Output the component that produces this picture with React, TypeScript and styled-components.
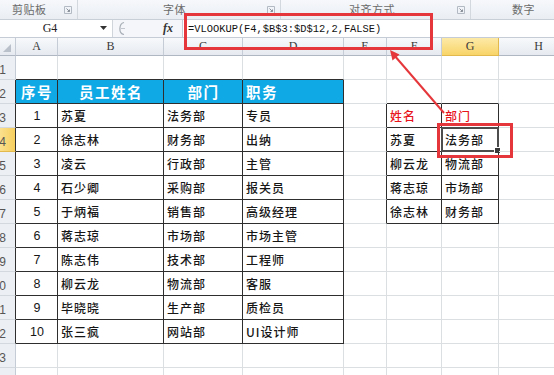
import styled, { createGlobalStyle, css } from 'styled-components';

const GlobalStyle = createGlobalStyle`
  html, body { margin: 0; padding: 0; background: #fff; }
  body { font-family: "Noto Sans CJK SC", "Liberation Sans", sans-serif; }
`;

const COLS = [16, 42, 106, 79, 101, 43, 55, 57, 80];
const LETTERS = ['', 'A', 'B', 'C', 'D', 'E', 'F', 'G', 'H'];
const ROW_COUNT = 14;
const GRID = '#dcdfe2';
const DARK = '#2e2e2e';

const staff = [
  ['1', '苏夏', '法务部', '专员'],
  ['2', '徐志林', '财务部', '出纳'],
  ['3', '凌云', '行政部', '主管'],
  ['4', '石少卿', '采购部', '报关员'],
  ['5', '于炳福', '销售部', '高级经理'],
  ['6', '蒋志琼', '市场部', '市场主管'],
  ['7', '陈志伟', '技术部', '工程师'],
  ['8', '柳云龙', '物流部', '客服'],
  ['9', '毕晓晓', '生产部', '质检员'],
  ['10', '张三疯', '网站部', 'UI设计师'],
];

const lookup = [
  ['姓名', '部门'],
  ['苏夏', '法务部'],
  ['柳云龙', '物流部'],
  ['蒋志琼', '市场部'],
  ['徐志林', '财务部'],
];

type Kind = 'plain' | 'num' | 'head' | 'red';

const Page = styled.div`
  position: relative;
  width: 554px;
  height: 375px;
  overflow: hidden;
  background: #fff;
`;

const Ribbon = styled.div`
  display: flex;
  height: 20px;
  background: linear-gradient(#f6f8fb, #eaeef3);
  border-bottom: 1px solid #c9cfd7;
  box-sizing: border-box;
`;

const Group = styled.div<{ $w: number; $pl: number }>`
  flex: 0 0 ${p => p.$w}px;
  display: flex;
  align-items: center;
  padding-left: ${p => p.$pl}px;
  border-right: 1px solid #d3d8df;
  box-sizing: border-box;
`;

const GroupLabel = styled.span`
  font-size: 11px;
  line-height: 1;
  color: #6a6a6a;
  letter-spacing: 0.5px;
  white-space: nowrap;
`;

const Launcher = styled.svg`
  flex: 0 0 8px;
  width: 8px;
  height: 8px;
  margin: 0 5px 0 auto;
`;

const FormulaBar = styled.div`
  display: flex;
  height: 17px;
  border-bottom: 1px solid #c5ccd5;
  background: #f4f6f9;
`;

const NameBox = styled.div`
  flex: 0 0 113px;
  display: flex;
  align-items: center;
  background: #fff;
  border-right: 1px solid #d0d5dc;
  box-sizing: border-box;
`;

const NameText = styled.span`
  flex: 0 0 100px;
  text-align: center;
  font-family: "Liberation Serif", serif;
  font-size: 12px;
  color: #222;
`;

const Handle = styled.svg`
  flex: 0 0 14px;
  width: 14px;
  height: 17px;
  margin-left: 2px;
`;

const FxArea = styled.div`
  flex: 0 0 53px;
  display: flex;
  align-items: center;
  justify-content: flex-end;
  padding-right: 9px;
  box-sizing: border-box;
`;

const Fx = styled.span`
  font-family: "Liberation Serif", serif;
  font-style: italic;
  font-weight: bold;
  font-size: 12px;
  color: #333;
`;

const FormulaInput = styled.div`
  flex: 1;
  display: flex;
  align-items: center;
  padding-left: 5px;
  background: #fff;
  border-left: 1px solid #c5ccd5;
  font-family: "Liberation Mono", monospace;
  font-size: 10.4px;
  color: #111;
  white-space: nowrap;
`;

const Sheet = styled.div`
  display: grid;
  grid-template-columns: ${COLS.map(c => c + 'px').join(' ')};
  grid-template-rows: 18px;
  grid-auto-rows: 24px;
`;

const ColHead = styled.div<{ $active?: boolean }>`
  box-sizing: border-box;
  display: flex;
  align-items: center;
  justify-content: center;
  font-family: "Liberation Serif", serif;
  font-size: 12px;
  color: #3a3a3a;
  border-right: 1px solid #c6ccd5;
  border-bottom: 1px solid #aeb7c2;
  background: ${p => (p.$active ? 'linear-gradient(#fdeaa8, #f8d468)' : 'linear-gradient(#f7f9fb, #e6eaf0)')};
  ${p => p.$active && css`border-color: #e2b94c;`}
`;

const Corner = styled(ColHead)`
  justify-content: flex-end;
  align-items: flex-end;
  padding: 0 4px 3px 0;
`;

const RowHead = styled.div<{ $active?: boolean; $edge: string }>`
  box-sizing: border-box;
  display: flex;
  align-items: flex-end;
  justify-content: flex-end;
  padding: 0 9px 2px 0;
  overflow: hidden;
  font-family: "Liberation Sans", sans-serif;
  font-size: 12px;
  color: #555;
  border-right: 1px solid ${p => p.$edge};
  border-bottom: 1px solid ${p => (p.$active ? '#e2b94c' : '#d3d8de')};
  background: ${p => (p.$active ? 'linear-gradient(90deg, #fbe08e, #f7cf5e)' : '#eceff3')};
`;

const kindStyles: Record<Kind, ReturnType<typeof css>> = {
  plain: css`
    font-size: 12px;
    font-weight: 500;
    letter-spacing: 1px;
    color: #161616;
  `,
  num: css`
    font-family: "Liberation Sans", sans-serif;
    font-size: 12.5px;
    color: #161616;
  `,
  head: css`
    background: #0fa9e6;
    color: #fff;
    font-weight: bold;
    font-size: 14.5px;
    letter-spacing: 1.5px;
  `,
  red: css`
    font-size: 12px;
    font-weight: 500;
    letter-spacing: 1px;
    color: #e8141c;
  `,
};

const Cell = styled.div<{ $right: string; $bottom: string; $center?: boolean; $kind: Kind }>`
  box-sizing: border-box;
  position: relative;
  display: flex;
  align-items: center;
  justify-content: ${p => (p.$center ? 'center' : 'flex-start')};
  padding: 0 2px 0 3px;
  border-right: 1px solid ${p => p.$right};
  border-bottom: 1px solid ${p => p.$bottom};
  white-space: nowrap;
  ${p => kindStyles[p.$kind]}
`;

const Selection = styled.div`
  position: absolute;
  left: -1px;
  top: -1px;
  right: -1px;
  bottom: -1px;
  border: 2px solid #4d4d4d;
  pointer-events: none;
`;

const FillHandle = styled.div`
  position: absolute;
  right: -4px;
  bottom: -4px;
  width: 5px;
  height: 5px;
  background: #3a3a3a;
  border: 1px solid #fff;
`;

const RedFrame = styled.div<{ $x: number; $y: number; $w: number; $h: number }>`
  position: absolute;
  left: ${p => p.$x}px;
  top: ${p => p.$y}px;
  width: ${p => p.$w}px;
  height: ${p => p.$h}px;
  box-sizing: border-box;
  border: 3px solid #e5373b;
  pointer-events: none;
`;

const ArrowLayer = styled.svg`
  position: absolute;
  left: 0;
  top: 0;
  width: 554px;
  height: 375px;
  pointer-events: none;
`;

function inTable(r: number, c: number) {
  const t1 = r >= 2 && r <= 12 && c >= 1 && c <= 4;
  const t2 = r >= 3 && r <= 7 && c >= 6 && c <= 7;
  return t1 || t2;
}

function cellContent(r: number, c: number): { text: string; kind: Kind; center?: boolean } {
  if (r === 2 && c >= 1 && c <= 4) {
    const heads = ['序号', '员工姓名', '部门', '职务'];
    return { text: heads[c - 1], kind: 'head', center: c !== 4 };
  }
  if (r >= 3 && r <= 12 && c >= 1 && c <= 4) {
    const row = staff[r - 3];
    if (c === 1) return { text: row[0], kind: 'num', center: true };
    return { text: row[c - 1], kind: 'plain' };
  }
  if (r >= 3 && r <= 7 && (c === 6 || c === 7)) {
    return { text: lookup[r - 3][c - 6], kind: r === 3 ? 'red' : 'plain' };
  }
  return { text: '', kind: 'plain' };
}

function LauncherIcon() {
  return (
    <Launcher viewBox="0 0 8 8">
      <path d="M0.5 0.5h7v7h-7z" fill="none" stroke="#b4bac3" strokeWidth="1" />
      <path d="M2.5 2.5l3 3M5.5 3.5v2h-2" fill="none" stroke="#8a9099" strokeWidth="1" />
    </Launcher>
  );
}

function RowGroup({ r }: { r: number }) {
  return (
    <>
      <RowHead $active={r === 4} $edge={inTable(r, 1) ? DARK : '#c6ccd5'}>
        {r}
      </RowHead>
      {COLS.slice(1).map((_, i) => {
        const c = i + 1;
        const content = cellContent(r, c);
        const right = inTable(r, c) || inTable(r, c + 1) ? DARK : GRID;
        const bottom = inTable(r, c) || inTable(r + 1, c) ? DARK : GRID;
        return (
          <Cell key={c} $right={right} $bottom={bottom} $center={content.center} $kind={content.kind}>
            {content.text}
            {r === 4 && c === 7 && (
              <Selection>
                <FillHandle />
              </Selection>
            )}
          </Cell>
        );
      })}
    </>
  );
}

export default function App() {
  const rows = Array.from({ length: ROW_COUNT }, (_, i) => i + 1);

  return (
    <Page>
      <GlobalStyle />
      <Ribbon>
        <Group $w={78} $pl={12}>
          <GroupLabel>剪贴板</GroupLabel>
          <LauncherIcon />
        </Group>
        <Group $w={203} $pl={85}>
          <GroupLabel>字体</GroupLabel>
          <LauncherIcon />
        </Group>
        <Group $w={190} $pl={68}>
          <GroupLabel>对齐方式</GroupLabel>
          <LauncherIcon />
        </Group>
        <Group $w={114} $pl={41}>
          <GroupLabel>数字</GroupLabel>
        </Group>
      </Ribbon>

      <FormulaBar>
        <NameBox>
          <NameText>G4</NameText>
          <svg width="7" height="5" viewBox="0 0 7 5">
            <path d="M0 0h7L3.5 4z" fill="#333" />
          </svg>
        </NameBox>
        <Handle viewBox="0 0 14 17">
          <path d="M9 2.5C4 3.5 3 13.5 9 14.5" fill="none" stroke="#a7adb5" strokeWidth="1.2" />
          <path d="M6 8.5h4" stroke="#c2c7ce" strokeWidth="1" />
        </Handle>
        <FxArea>
          <Fx>fx</Fx>
        </FxArea>
        <FormulaInput>=VLOOKUP(F4,$B$3:$D$12,2,FALSE)</FormulaInput>
      </FormulaBar>

      <Sheet>
        <Corner>
          <svg width="8" height="8" viewBox="0 0 8 8">
            <path d="M8 0v8H0z" fill="#b9c0c9" />
          </svg>
        </Corner>
        {LETTERS.slice(1).map((l, i) => (
          <ColHead key={l} $active={i + 1 === 7}>
            {l}
          </ColHead>
        ))}

        {rows.map(r => (
          <RowGroup key={r} r={r} />
        ))}
      </Sheet>

      <RedFrame $x={184} $y={13} $w={249} $h={37} />
      <RedFrame $x={437} $y={123} $w={76} $h={35} />
      <ArrowLayer viewBox="0 0 554 375">
        <line x1="444" y1="113" x2="394" y2="55" stroke="#e5373b" strokeWidth="2" />
        <polygon points="390,50 399.5,54.5 392.5,60.5" fill="#e5373b" />
      </ArrowLayer>
    </Page>
  );
}
